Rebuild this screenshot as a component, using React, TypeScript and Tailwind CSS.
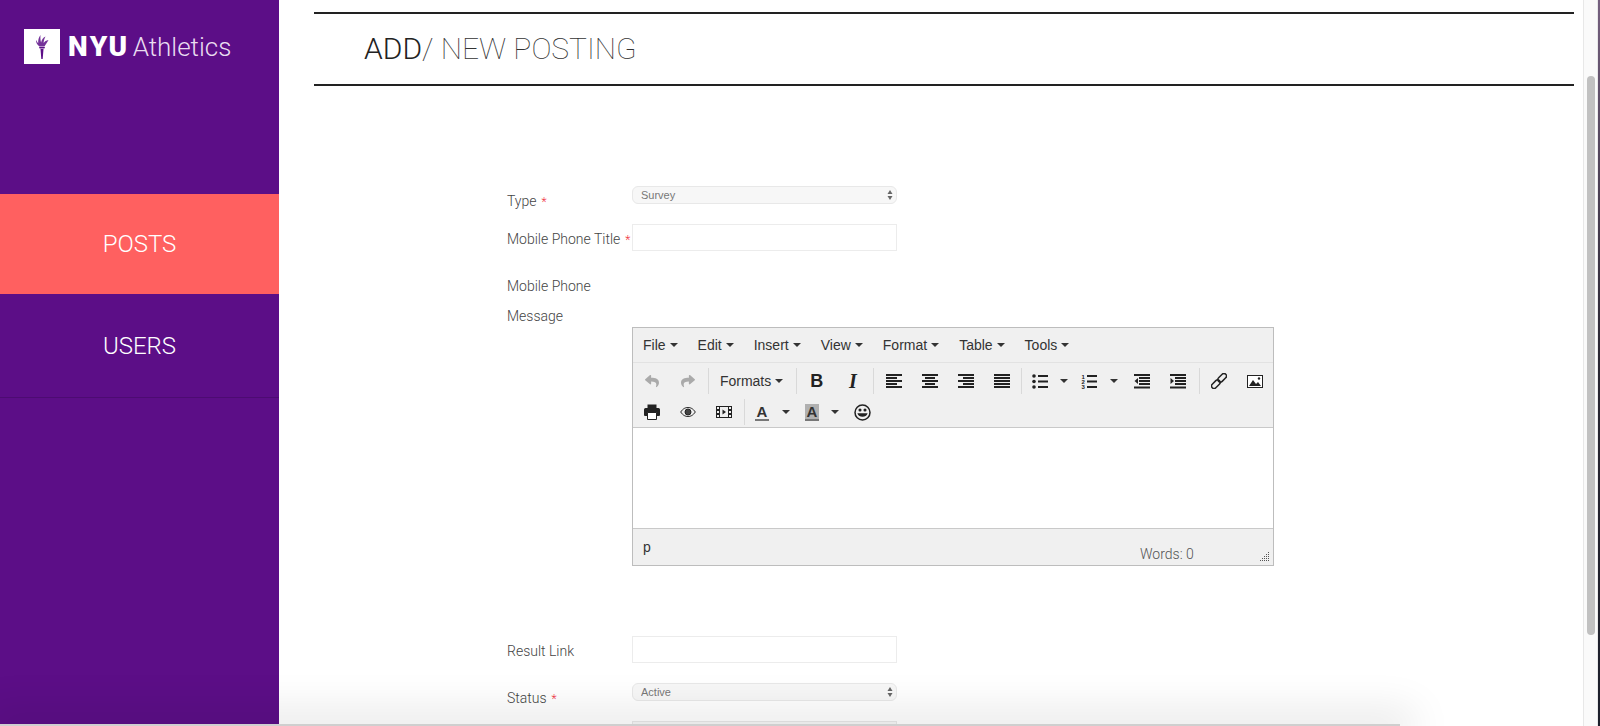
import React from 'react'
import { FaReply, FaShare } from 'react-icons/fa'

const ROBOTO = "font-['Roboto',sans-serif]"

function Caret({ className = '' }: { className?: string }) {
  return <span className={`inline-block w-0 h-0 border-x-[4px] border-x-transparent border-t-[4px] border-t-[#333] ${className}`} />
}

function Lines({ rows }: { rows: Array<[number, number]> }) {
  return (
    <svg width="16" height="15" viewBox="0 0 16 15" fill="#222">
      {rows.map(([x, w], i) => <rect key={i} x={x} y={i * 3} width={w} height="2" />)}
    </svg>
  )
}

function Btn({ children, w = 'w-[36px]' }: { children: React.ReactNode; w?: string }) {
  return <div className={`${w} h-[30px] shrink-0 flex items-center justify-center`}>{children}</div>
}

function Sep() {
  return <div className="w-px h-[26px] bg-[#d9d9d9] shrink-0" />
}

function ListIcon({ numbered }: { numbered?: boolean }) {
  return (
    <svg width="16" height="15" viewBox="0 0 16 15" fill="#222">
      {[1, 6.5, 12].map(y => <rect key={y} x="6" y={y} width="10" height="2" />)}
      {numbered
        ? ['1', '2', '3'].map((n, i) => (
            <text key={n} x="0.5" y={5 + i * 5} fontSize="6" fontFamily="Liberation Sans" fontWeight="bold">{n}</text>
          ))
        : [2, 7.5, 13].map(y => <circle key={y} cx="2" cy={y} r="1.8" />)}
    </svg>
  )
}

function IndentIcon({ out }: { out?: boolean }) {
  return (
    <svg width="16" height="15" viewBox="0 0 16 15" fill="#222">
      <rect x="0" y="0" width="16" height="2" />
      <rect x="5" y="3" width="11" height="2" />
      <rect x="5" y="6" width="11" height="2" />
      <rect x="5" y="9" width="11" height="2" />
      <rect x="0" y="12.5" width="16" height="2" />
      <path d={out ? 'M4 4v6L0.5 7z' : 'M0.5 4v6L4 7z'} />
    </svg>
  )
}

function Req() {
  return <span className="text-[#f0303c] text-[12px] ml-[5px]">*</span>
}

function SelectBox({ value }: { value: string }) {
  return (
    <div className="relative w-[265px] h-[18px]">
      <select
        defaultValue={value}
        className="block appearance-none w-full h-full bg-[#f7f7f7] border border-[#e8e8e8] rounded-[6px] pl-[8px] text-[11px] leading-none text-[#777] font-['Liberation_Sans',sans-serif] outline-none"
      >
        <option>{value}</option>
      </select>
      <svg className="absolute right-[4px] top-[4px]" width="6" height="10" viewBox="0 0 6 10" fill="#666">
        <path d="M3 0l2.500 4h-5zM3 10L.5 6h5z" />
      </svg>
    </div>
  )
}

const MENUS = ['File', 'Edit', 'Insert', 'View', 'Format', 'Table', 'Tools']

export default function App() {
  return (
    <div className={`relative flex h-[726px] w-[1600px] overflow-hidden bg-white ${ROBOTO}`}>
      {/* Sidebar */}
      <aside className="w-[279px] shrink-0 bg-[#5c0e87] text-white">
        <div className="h-[194px] pt-[29px] pl-[24px]">
          <div className="flex items-center">
            <div className="w-[36px] h-[35px] bg-white flex items-center justify-center">
              <svg width="14" height="24" viewBox="0 0 14 24" fill="#5c0e87">
                <path d="M6.300 24L5.500 14h3l-.8 10zM4 12h6l-.6 1.500H4.600z" />
                <path d="M4.500 11.500C2.500 10 .8 8 1 5c.8 1 1.300 2.400 2.200 3.200C3 5.500 3.500 2.500 5.500 0c-.3 2.800 0 5.500.6 7.500C6.500 5 8 2.500 10.500 1.500 9.500 3.500 8.500 6 8.700 8c.8-1.400 2.500-2.700 4.800-3-1.300 2.500-3 4.800-4 6.500z" opacity=".85" />
              </svg>
            </div>
            <span className="ml-[8px] text-[28px] font-black leading-none tracking-[2.5px]">NYU</span>
            <span className="ml-[3px] text-[26px] font-light leading-none text-[#e9dcf0]">Athletics</span>
          </div>
        </div>
        <div className="h-[100px] bg-[#ff6060] flex items-center justify-center text-[24px] font-light">POSTS</div>
        <div className="h-[104px] border-b border-[#4d0b72] flex items-center justify-center text-[24px] font-light">USERS</div>
      </aside>

      {/* Main */}
      <main className="w-[1303px] shrink-0 pl-[35px] pt-[12px]">
        <div className="w-[1260px] h-[74px] border-y-2 border-[#222] flex items-center pl-[50px] pb-[2px] text-[30px]">
          <span className="font-light text-[#222]">ADD</span>
          <span className="font-thin text-[#333]">/ NEW POSTING</span>
        </div>

        <div className="pl-[193px] pt-[100px] text-[14px] font-light text-[#444]">
          <div className="flex h-[38px]">
            <div className="w-[125px] pt-[5px]">Type<Req /></div>
            <SelectBox value="Survey" />
          </div>
          <div className="flex h-[52px]">
            <div className="w-[125px] pt-[5px] whitespace-nowrap">Mobile Phone Title<Req /></div>
            <input className="w-[265px] h-[27px] border border-[#ececec] outline-none" />
          </div>
          <div className="h-[30px] leading-[20px]">Mobile Phone</div>
          <div className="h-[21px] leading-[20px]">Message</div>

          {/* Editor */}
          <div className="ml-[125px] w-[642px] h-[239px] border border-[#bdbdbd] flex flex-col bg-white font-['Liberation_Sans',sans-serif] font-normal text-[#333]">
            <div className="h-[35px] bg-[#f0f0f0] border-b border-[#e2e2e2] flex items-center pl-[10px] text-[14px]">
              {MENUS.map(m => (
                <div key={m} className="flex items-center mr-[20px]">
                  {m}
                  <Caret className="ml-[4px]" />
                </div>
              ))}
            </div>
            <div className="h-[65px] bg-[#f0f0f0] border-b border-[#c9c9c9] pt-[3px]">
              <div className="flex items-center pl-[1px]">
                <Btn><FaReply size={14} color="#aaa" /></Btn>
                <Btn><FaShare size={14} color="#aaa" /></Btn>
                <div className="w-[2px]" />
                <Sep />
                <div className="w-[87px] flex items-center pl-[11px] text-[14px] shrink-0">
                  Formats<Caret className="ml-[4px]" />
                </div>
                <Sep />
                <div className="w-[2px]" />
                <Btn><span className="font-bold text-[18px] leading-none text-[#222]">B</span></Btn>
                <Btn><span className="font-['Liberation_Serif',serif] italic font-bold text-[20px] leading-none text-[#222]">I</span></Btn>
                <div className="w-[2px]" />
                <Sep />
                <div className="w-[2px]" />
                <Btn><Lines rows={[[0, 16], [0, 11], [0, 16], [0, 11], [0, 16]]} /></Btn>
                <Btn><Lines rows={[[0, 16], [3, 10], [0, 16], [3, 10], [0, 16]]} /></Btn>
                <Btn><Lines rows={[[0, 16], [5, 11], [0, 16], [5, 11], [0, 16]]} /></Btn>
                <Btn><Lines rows={[[0, 16], [0, 16], [0, 16], [0, 16], [0, 16]]} /></Btn>
                <div className="w-[2px]" />
                <Sep />
                <Btn><ListIcon /></Btn>
                <Btn w="w-[11px]"><Caret /></Btn>
                <div className="w-[2px]" />
                <Btn><ListIcon numbered /></Btn>
                <Btn w="w-[14px]"><Caret /></Btn>
                <div className="w-[3px]" />
                <Btn><IndentIcon out /></Btn>
                <Btn><IndentIcon /></Btn>
                <div className="w-[3px]" />
                <Sep />
                <div className="w-[1px]" />
                <Btn>
                  <svg width="16" height="16" viewBox="0 0 16 16" fill="none" stroke="#222" strokeWidth="1.500">
                    <g transform="rotate(-45 8 8)">
                      <rect x="-1.500" y="5.500" width="10" height="5" rx="2.500" />
                      <rect x="7.500" y="5.500" width="10" height="5" rx="2.500" />
                    </g>
                  </svg>
                </Btn>
                <Btn>
                  <svg width="16" height="13" viewBox="0 0 16 13">
                    <rect x=".5" y=".5" width="15" height="12" fill="#fff" stroke="#222" />
                    <path d="M2 11l4-6 3 4 2-2 3 4z" fill="#222" />
                    <circle cx="12" cy="3.500" r="1.200" fill="#222" />
                  </svg>
                </Btn>
              </div>
              <div className="flex items-center pl-[1px] mt-[1px]">
                <Btn>
                  <svg width="16" height="16" viewBox="0 0 16 16">
                    <path d="M3.500 0.500h9v4h-9z" fill="#222" />
                    <path d="M1.500 4h13a1.500 1.500 0 0 1 1.500 1.500V11a1 1 0 0 1-1 1h-2V9H3v3H1a1 1 0 0 1-1-1V5.500A1.500 1.500 0 0 1 1.500 4z" fill="#222" />
                    <path d="M3.500 8.500h9V15.500h-9z" fill="#fff" stroke="#222" />
                  </svg>
                </Btn>
                <Btn>
                  <svg width="16" height="12" viewBox="0 0 16 12" fill="none" stroke="#222">
                    <path d="M.7 6C3 2.500 5.500 1.500 8 1.500s5 1 7.300 4.500C13 9.500 10.500 10.500 8 10.500S3 9.500.7 6z" />
                    <circle cx="8" cy="6" r="3" fill="#444" />
                  </svg>
                </Btn>
                <Btn>
                  <svg width="16" height="12" viewBox="0 0 16 12" fill="#222">
                    <path fillRule="evenodd" d="M0 0h16v12H0zM1 1v2h2V1zM1 5v2h2V5zM1 9v2h2V9zM13 1v2h2V1zM13 5v2h2V5zM13 9v2h2V9zM4 1v10h8V1z" />
                    <path d="M6.500 3.500v5L10 6z" />
                  </svg>
                </Btn>
                <div className="w-[2px]" />
                <Sep />
                <div className="w-[2px]" />
                <Btn w="w-[30px]">
                  <span className="border-b-2 border-[#777] text-[15px] font-bold leading-[15px] px-[2px] text-[#333]">A</span>
                </Btn>
                <Btn w="w-[18px]"><Caret /></Btn>
                <div className="w-[7px]" />
                <Btn w="w-[20px]">
                  <span className="bg-[#b0b0b0] border-b-2 border-[#777] text-[15px] font-bold leading-[15px] px-[2px] text-[#333]">A</span>
                </Btn>
                <Btn w="w-[26px]"><Caret /></Btn>
                <Btn w="w-[28px]">
                  <svg width="17" height="17" viewBox="0 0 17 17" fill="none" stroke="#222" strokeWidth="1.500">
                    <circle cx="8.500" cy="8.500" r="7.500" />
                    <path d="M4.500 10c1 2.500 7 2.500 8 0z" fill="#222" />
                    <circle cx="6" cy="6" r=".8" fill="#222" />
                    <circle cx="11" cy="6" r=".8" fill="#222" />
                  </svg>
                </Btn>
              </div>
            </div>
            <div className="flex-1" />
            <div className="relative h-[37px] bg-[#f0f0f0] border-t border-[#c9c9c9] text-[14px] pl-[10px] pt-[8px]">
              p
              <span className={`absolute left-[507px] top-[17px] ${ROBOTO} font-light text-[14px] leading-[16px] text-[#555]`}>Words: 0</span>
              <svg className="absolute right-[3px] bottom-[3px]" width="10" height="10" viewBox="0 0 10 10" fill="#555">
                {[[8, 0], [6, 2], [8, 2], [4, 4], [6, 4], [8, 4], [2, 6], [4, 6], [6, 6], [8, 6], [0, 8], [2, 8], [4, 8], [6, 8], [8, 8]].map(([x, y], i) => (
                  <rect key={i} x={x} y={y} width="1" height="1" />
                ))}
              </svg>
            </div>
          </div>

          <div className="flex h-[47px] mt-[70px]">
            <div className="w-[125px] pt-[5px]">Result Link</div>
            <input className="w-[265px] h-[27px] border border-[#ececec] outline-none" />
          </div>
          <div className="flex h-[38px]">
            <div className="w-[125px] pt-[5px]">Status<Req /></div>
            <SelectBox value="Active" />
          </div>
          <div className="ml-[125px] w-[265px] h-[27px] bg-[#f7f7f7] border border-[#e8e8e8]" />
        </div>
      </main>

      {/* Scrollbar */}
      <div className="w-[15px] shrink-0 bg-[#fafafa] border-x border-[#e8e8e8] pt-[76px] ml-[1px]">
        <div className="w-[8px] h-[559px] mx-auto rounded-full bg-[#c1c1c1]" />
      </div>
      <div className="flex-1 bg-gradient-to-b from-[#75607f] via-[#2a2733] to-[#1c1f2b]" />

      {/* Window bottom shadow */}
      <div className="absolute left-0 bottom-0 w-[1400px] h-[2px] bg-[#cfcfcf] shadow-[0_0_40px_14px_rgba(0,0,0,0.1)]" />
    </div>
  )
}
